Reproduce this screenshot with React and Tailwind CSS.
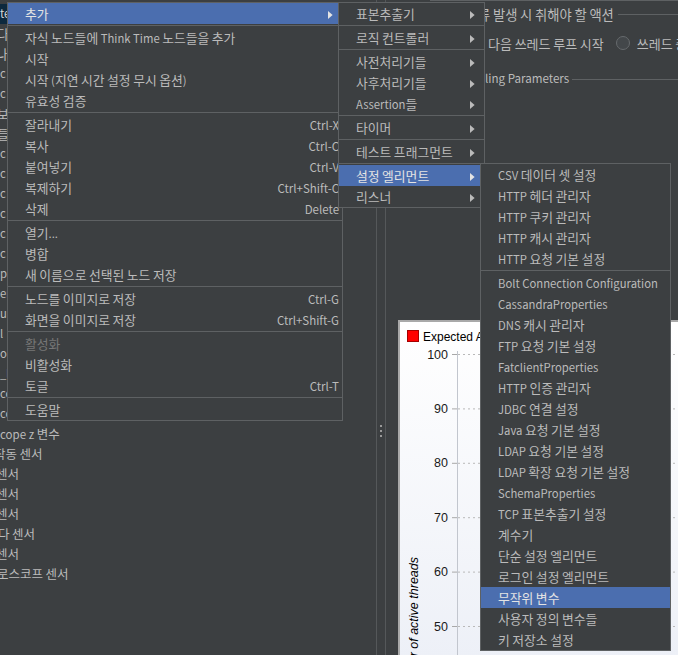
import React from "react";

const HANGUL = /([\u1100-\u11FF\u3130-\u318F\uAC00-\uD7AF]+)/;

function Txt({ t, ko = "text-[12.8px]", la = "text-[11.3px]" }) {
  return t
    .split(HANGUL)
    .filter(Boolean)
    .map((s, i) =>
      HANGUL.test(s) ? (
        <span key={i} className={ko}>
          {s}
        </span>
      ) : (
        <span key={i} className={la}>
          {s}
        </span>
      )
    );
}

const menu1 = [
  { t: "추가", arrow: true, hl: true },
  "sep",
  { t: "자식 노드들에 Think Time 노드들을 추가" },
  { t: "시작" },
  { t: "시작 (지연 시간 설정 무시 옵션)" },
  { t: "유효성 검증" },
  "sep",
  { t: "잘라내기", sc: "Ctrl-X" },
  { t: "복사", sc: "Ctrl-C" },
  { t: "붙여넣기", sc: "Ctrl-V" },
  { t: "복제하기", sc: "Ctrl+Shift-C" },
  { t: "삭제", sc: "Delete" },
  "sep",
  { t: "열기..." },
  { t: "병합" },
  { t: "새 이름으로 선택된 노드 저장" },
  "sep",
  { t: "노드를 이미지로 저장", sc: "Ctrl-G" },
  { t: "화면을 이미지로 저장", sc: "Ctrl+Shift-G" },
  "sep",
  { t: "활성화", dis: true },
  { t: "비활성화" },
  { t: "토글", sc: "Ctrl-T" },
  "sep",
  { t: "도움말" },
];

const menu2 = [
  { t: "표본추출기", arrow: true },
  "sep",
  { t: "로직 컨트롤러", arrow: true },
  "sep",
  { t: "사전처리기들", arrow: true },
  { t: "사후처리기들", arrow: true },
  { t: "Assertion들", arrow: true },
  "sep",
  { t: "타이머", arrow: true },
  "sep",
  { t: "테스트 프래그먼트", arrow: true },
  "sep",
  { t: "설정 엘리먼트", arrow: true, hl: true },
  { t: "리스너", arrow: true },
];

const menu3 = [
  { t: "CSV 데이터 셋 설정" },
  { t: "HTTP 헤더 관리자" },
  { t: "HTTP 쿠키 관리자" },
  { t: "HTTP 캐시 관리자" },
  { t: "HTTP 요청 기본 설정" },
  "sep",
  { t: "Bolt Connection Configuration" },
  { t: "CassandraProperties" },
  { t: "DNS 캐시 관리자" },
  { t: "FTP 요청 기본 설정" },
  { t: "FatclientProperties" },
  { t: "HTTP 인증 관리자" },
  { t: "JDBC 연결 설정" },
  { t: "Java 요청 기본 설정" },
  { t: "LDAP 요청 기본 설정" },
  { t: "LDAP 확장 요청 기본 설정" },
  { t: "SchemaProperties" },
  { t: "TCP 표본추출기 설정" },
  { t: "계수기" },
  { t: "단순 설정 엘리먼트" },
  { t: "로그인 설정 엘리먼트" },
  { t: "무작위 변수", hl: true },
  { t: "사용자 정의 변수들" },
  { t: "키 저장소 설정" },
];

const treeTop = [
  { t: "te", sel: true },
  { t: "다", cls: "ml-[-3px]" },
  { t: "나", cls: "ml-[-4px]" },
  { t: "c" },
  { t: "c" },
  { t: "보", cls: "ml-[-3px]" },
  { t: "들", cls: "ml-[-3px]" },
  { t: "c" },
  { t: "c" },
  { t: "c" },
  { t: "c" },
  { t: "c" },
  { t: "c" },
  { t: "pe" },
  { t: "er" },
  { t: "u" },
  { t: "l" },
  { t: "ol" },
  { t: "_l" },
  { t: "cc" },
  { t: "cc" },
];

const treeBottom = [
  { t: "cope z 변수", cls: "ml-0" },
  { t: "작동 센서", cls: "ml-[-6px]" },
  { t: "센서", cls: "ml-[-4px]" },
  { t: "센서", cls: "ml-[-4px]" },
  { t: "센서", cls: "ml-[-4px]" },
  { t: "다 센서", cls: "ml-[-2px]" },
  { t: "센서", cls: "ml-[-4px]" },
  { t: "로스코프 센서", cls: "ml-[-3px]" },
];

function Arrow({ light }) {
  return (
    <svg className="mr-[9px] shrink-0" width="5" height="8" viewBox="0 0 5 8">
      <path d="M0 0 L4.6 4 L0 8 Z" fill={light ? "#e4e4e4" : "#bbbbbb"} />
    </svg>
  );
}

function Sep() {
  return (
    <div className="flex h-[3px] items-center">
      <div className="h-px w-full bg-[#5e6163]" />
    </div>
  );
}

function Row({ t, sc, arrow, hl, dis }) {
  const color = hl
    ? "bg-[#4b6eaf] text-[#e4e4e4]"
    : dis
    ? "text-[#777777]"
    : "text-[#bbbbbb]";
  return (
    <div className={`flex h-[21px] items-center whitespace-nowrap pl-[17px] pt-[2px] ${color}`}>
      <span className="flex-1">
        <Txt t={t} />
      </span>
      {sc && <span className="pr-[3px] text-[11.5px]">{sc}</span>}
      {arrow && <Arrow light={hl} />}
    </div>
  );
}

function Menu({ items, className }) {
  return (
    <div className={`absolute border border-[#5e6163] bg-[#3c3f41] ${className}`}>
      {items.map((it, i) => (it === "sep" ? <Sep key={i} /> : <Row key={i} {...it} />))}
    </div>
  );
}

function Radio() {
  return <div className="h-[14px] w-[14px] shrink-0 rounded-full border border-[#666a6d] bg-[#43474a]" />;
}

function Chart() {
  const labels = [100, 90, 80, 70, 60, 50, 40];
  return (
    <div className="ml-[12px] mt-[231px] h-[340px] w-[300px] shrink-0 border-2 border-[#a9a9a9] bg-white">
      <svg width="296" height="336" viewBox="0 0 296 336">
        <defs>
          <linearGradient id="bgGrad" x1="0" y1="0" x2="0" y2="1">
            <stop offset="0" stopColor="#ffffff" />
            <stop offset="1" stopColor="#edf0f7" />
          </linearGradient>
        </defs>
        <rect x="0" y="0" width="296" height="336" fill="url(#bgGrad)" />
        <rect x="7.5" y="8.5" width="11" height="11" fill="#ff0000" stroke="#a40000" />
        <text x="23" y="18.5" fontSize="12" fontFamily="Liberation Sans, Arial, sans-serif" fill="#000">
          Expected Active Users Count
        </text>
        <line x1="57.5" y1="29" x2="57.5" y2="336" stroke="#c2c6ce" strokeWidth="1" />
        {labels.map((v, i) => {
          const y = 32 + i * 54.4;
          return (
            <g key={v}>
              <text
                x="48"
                y={y + 4.5}
                textAnchor="end"
                fontSize="12.5"
                fontFamily="Liberation Sans, Arial, sans-serif"
                fill="#1a1a1a"
              >
                {v}
              </text>
              <line x1="52" y1={y + 0.5} x2="57" y2={y + 0.5} stroke="#a8a8a8" />
              <line x1="58" y1={y + 0.5} x2="296" y2={y + 0.5} stroke="#b9b9b9" strokeDasharray="2 3" />
            </g>
          );
        })}
        <text
          transform="translate(18 235) rotate(-90)"
          textAnchor="end"
          fontSize="12.5"
          fontStyle="italic"
          fontFamily="Liberation Sans, Arial, sans-serif"
          fill="#000"
        >
          Number of active threads
        </text>
      </svg>
    </div>
  );
}

export default function App() {
  return (
    <div className="relative h-[655px] w-[678px] overflow-hidden bg-[#3c3f41] font-['Noto_Sans_CJK_KR',sans-serif] text-[11.5px] leading-none text-[#bbbbbb]">
      <div className="flex h-full">
        {/* tree panel */}
        <div className="flex w-[377px] shrink-0 flex-col overflow-hidden border-r border-[#55585a] pt-[4px]">
          {treeTop.map((r, i) => (
            <div
              key={i}
              className={`flex h-[20px] w-[7px] shrink-0 items-center overflow-hidden whitespace-nowrap ${
                r.sel ? "bg-[#0d293e] text-[#d8d8d8]" : ""
              }`}
            >
              <span className={r.cls || "ml-0"}>
                <Txt t={r.t} />
              </span>
            </div>
          ))}
          {treeBottom.map((r, i) => (
            <div key={i} className="flex h-[20px] shrink-0 items-center whitespace-nowrap">
              <span className={r.cls}>
                <Txt t={r.t} ko="text-[12.5px]" la="text-[11.5px]" />
              </span>
            </div>
          ))}
        </div>
        {/* split grip */}
        <div className="flex w-[8px] shrink-0 flex-col items-center gap-[3px] pt-[425px]">
          <div className="h-[2px] w-[2px] bg-[#9a9a9a]" />
          <div className="h-[2px] w-[2px] bg-[#9a9a9a]" />
          <div className="h-[2px] w-[2px] bg-[#9a9a9a]" />
        </div>
        {/* right panel */}
        <div className="flex min-w-0 flex-1 flex-col overflow-hidden border-l border-[#55585a] text-[12px]">
          <div className="ml-[44px] h-px shrink-0 bg-[#5e6163]" />
          <div className="flex h-[27px] shrink-0 items-center whitespace-nowrap pl-[37px]">
            <span className="inline-block w-[55px] overflow-hidden text-right">
              <Txt t="샘플러 오" ko="text-[13px]" la="text-[12px]" />
            </span>
            <span>
              <Txt t="류 발생 시 취해야 할 액션" ko="text-[13.3px]" la="text-[12px]" />
            </span>
            <div className="ml-[4px] h-px flex-1 bg-[#5e6163]" />
          </div>
          <div className="flex h-[30px] shrink-0 items-center whitespace-nowrap pl-[81px]">
            <Radio />
            <span className="ml-[7px]">
              <Txt t="다음 쓰레드 루프 시작" ko="text-[13px]" la="text-[12px]" />
            </span>
            <div className="ml-[12px]">
              <Radio />
            </div>
            <span className="ml-[7px]">
              <Txt t="쓰레드 중지" ko="text-[13px]" la="text-[12px]" />
            </span>
            <div className="ml-[12px]">
              <Radio />
            </div>
            <span className="ml-[7px]">
              <Txt t="테스트 중지" ko="text-[13px]" la="text-[12px]" />
            </span>
          </div>
          <div className="mt-[11px] flex h-[20px] shrink-0 items-center whitespace-nowrap pl-[30px] text-[11.6px]">
            <span className="inline-block w-[69px] overflow-hidden text-right">Threads Schedu</span>
            <span>ling Parameters</span>
            <div className="ml-[3px] h-px flex-1 bg-[#5e6163]" />
          </div>
          <Chart />
        </div>
      </div>

      <Menu items={menu1} className="left-[7px] top-[2px] w-[336px]" />
      <Menu items={menu2} className="left-[338px] top-[2px] w-[147px]" />
      <Menu items={menu3} className="left-[480px] top-[163px] w-[191px]" />
    </div>
  );
}
